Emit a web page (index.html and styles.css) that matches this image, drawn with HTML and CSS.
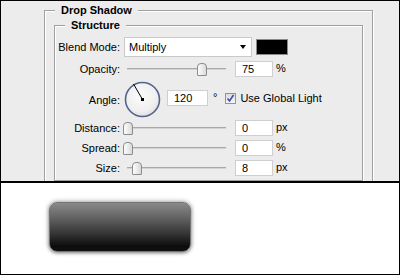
FILE: index.html
```html
<!DOCTYPE html>
<html lang="en">
<head>
    <meta charset="UTF-8">
    <title>Layer Style - Drop Shadow</title>
    <link rel="stylesheet" href="styles.css">
</head>
<body>
    <div class="window">
        <div class="panel">
            <fieldset class="group">
                <legend>Drop Shadow</legend>
                <fieldset class="group inner">
                    <legend>Structure</legend>

                    <div class="row blend">
                        <span class="label">Blend Mode:</span>
                        <div class="select">
                            <span>Multiply</span>
                            <span class="arrow"></span>
                        </div>
                        <span class="swatch"></span>
                    </div>

                    <div class="row">
                        <span class="label">Opacity:</span>
                        <div class="slider"><span class="thumb" style="left: 73px"></span></div>
                        <span class="field">75</span>
                        <span class="unit">%</span>
                    </div>

                    <div class="row angle">
                        <span class="label">Angle:</span>
                        <svg class="dial" width="37" height="37" viewBox="0 0 37 37">
                            <defs>
                                <radialGradient id="dialFill" cx="45%" cy="40%" r="65%">
                                    <stop offset="0" stop-color="#fbfbfb"/>
                                    <stop offset="0.7" stop-color="#efefef"/>
                                    <stop offset="1" stop-color="#d8d8dc"/>
                                </radialGradient>
                            </defs>
                            <circle cx="18.5" cy="18.5" r="17" fill="url(#dialFill)" stroke="#53648c" stroke-width="1.6"/>
                            <line x1="18.5" y1="18.5" x2="9.5" y2="3" stroke="#000" stroke-width="1"/>
                            <rect x="17" y="17" width="3" height="3" fill="#000"/>
                        </svg>
                        <span class="field angle-field">120</span>
                        <span class="deg">°</span>
                        <span class="check">
                            <svg width="11" height="11" viewBox="0 0 11 11">
                                <path d="M2.5 5.5 L4.5 8 L8.5 2" fill="none" stroke="#3c4fa8" stroke-width="1.6"/>
                            </svg>
                        </span>
                        <span class="check-label">Use Global Light</span>
                    </div>

                    <div class="row">
                        <span class="label">Distance:</span>
                        <div class="slider"><span class="thumb" style="left: -1px"></span></div>
                        <span class="field">0</span>
                        <span class="unit">px</span>
                    </div>

                    <div class="row">
                        <span class="label">Spread:</span>
                        <div class="slider"><span class="thumb" style="left: -1px"></span></div>
                        <span class="field">0</span>
                        <span class="unit">%</span>
                    </div>

                    <div class="row">
                        <span class="label">Size:</span>
                        <div class="slider"><span class="thumb" style="left: 8px"></span></div>
                        <span class="field">8</span>
                        <span class="unit">px</span>
                    </div>
                </fieldset>
            </fieldset>
        </div>

        <div class="preview">
            <div class="shape"></div>
        </div>
    </div>
</body>
</html>
```

FILE: styles.css
```css
body {
    margin: 0;
    font-family: "Liberation Sans", Arial, sans-serif;
    font-size: 11px;
    color: #000;
}
.window {
    width: 400px;
    height: 275px;
    box-sizing: border-box;
    border: 1px solid #000;
    background-color: #fff;
}
.panel {
    height: 180px;
    overflow: hidden;
    background-color: #ececec;
    border-bottom: 2px solid #000;
}
.group {
    margin: 2px 0 0 43px;
    width: 309px;
    padding: 1px 9px 0 9px;
    border: 1px solid #a0a0a0;
    box-shadow: inset 1px 1px 0 #fff, 1px 1px 0 #fff;
    min-height: 200px;
}
.group legend {
    margin-left: 1px;
    padding: 0 6px;
    line-height: 14px;
    font-weight: bold;
    font-size: 11px;
    background-color: #ececec;
}
.group.inner {
    margin: 0;
    width: auto;
    padding: 5px 10px 0 10px;
    min-height: 0;
}
.group.inner legend {
    margin-left: 0;
}
.row {
    display: flex;
    align-items: center;
    height: 16px;
    margin-bottom: 4px;
}
.row.blend {
    height: 20px;
}
.row.angle {
    height: 37px;
    margin-top: 1px;
    margin-bottom: 2px;
}
.label {
    width: 55px;
    margin-right: 4px;
    display: flex;
    justify-content: flex-end;
    white-space: nowrap;
}
.select {
    width: 128px;
    height: 20px;
    box-sizing: border-box;
    border: 1px solid #c9c9c9;
    background-color: #fff;
    display: flex;
    align-items: center;
    justify-content: space-between;
    padding: 0 5px 0 4px;
}
.arrow {
    width: 0;
    height: 0;
    border-left: 3.5px solid transparent;
    border-right: 3.5px solid transparent;
    border-top: 4px solid #000;
}
.swatch {
    width: 32px;
    height: 16px;
    box-sizing: border-box;
    margin-left: 4px;
    background-color: #000;
    border: 1px solid #8a8a8a;
}
.slider {
    position: relative;
    width: 102px;
    height: 16px;
}
.slider::before {
    content: "";
    position: absolute;
    left: 3px;
    right: 0;
    top: 7px;
    height: 1px;
    background-color: #a9a9a9;
    border-bottom: 1px solid #d4d4d4;
}
.thumb {
    position: absolute;
    top: 2px;
    width: 8px;
    height: 11px;
    border: 1px solid #8c8c8c;
    border-radius: 4px 4px 1px 1px;
    background: linear-gradient(to right, #fdfdfd, #dadada);
}
.field {
    width: 38px;
    height: 16px;
    box-sizing: border-box;
    margin-left: 9px;
    padding-left: 6px;
    border: 1px solid #cfcfcf;
    background-color: #fff;
    line-height: 14px;
}
.unit {
    margin-left: 3px;
    margin-bottom: 3px;
}
.dial {
    display: block;
}
.angle .field.angle-field {
    width: 41px;
    margin-left: 6px;
    margin-bottom: 3px;
}
.deg {
    margin-left: 5px;
    margin-bottom: 5px;
}
.check {
    width: 11px;
    height: 11px;
    box-sizing: border-box;
    margin-left: 8px;
    margin-bottom: 3px;
    border: 1px solid #8d93a8;
    background: linear-gradient(#dcdcdc, #f6f6f6);
    display: flex;
}
.check svg {
    margin: -1px;
}
.check-label {
    margin-left: 4px;
    margin-bottom: 3px;
    white-space: nowrap;
}
.preview {
    padding: 19px 0 0 48px;
}
.shape {
    width: 142px;
    height: 50px;
    box-sizing: border-box;
    border: 1px solid #747474;
    border-radius: 8px;
    background: linear-gradient(#8a8a8a, #6a6a6a 25%, #333 65%, #0c0c0c 90%, #111);
    box-shadow: 0 0 4px 1px rgba(0, 0, 0, 0.3), 0 1px 3px rgba(0, 0, 0, 0.3);
}
```
